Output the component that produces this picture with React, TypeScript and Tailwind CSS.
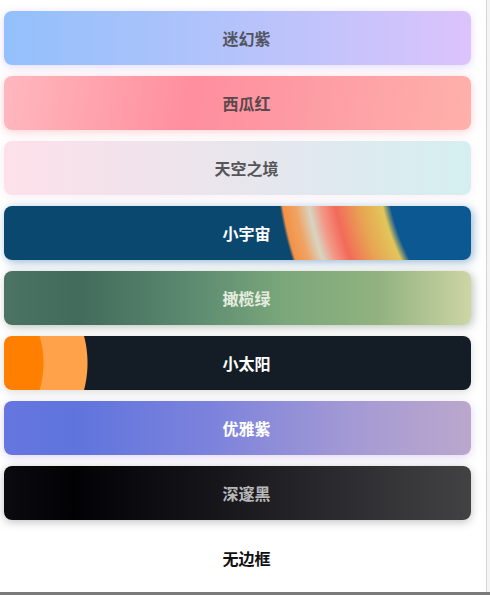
import React from "react";

type Item = {
  label: string;
  bg: string;
  text: string;
  shadow: string;
};

const items: Item[] = [
  {
    label: "迷幻紫",
    bg: "bg-[linear-gradient(to_right,#93c0fb_0%,#aac2fb_35%,#c4c3fb_70%,#dcc3fc_100%)]",
    text: "text-[#52555f]",
    shadow: "shadow-[0_2px_10px_rgba(190,170,250,0.45)]",
  },
  {
    label: "西瓜红",
    bg: "bg-[linear-gradient(100deg,#ffb8bf_0%,#ffa3ad_20%,#ff8e9e_40%,#fd9ca4_65%,#ffb1ab_100%)]",
    text: "text-[#5a484c]",
    shadow: "shadow-[0_2px_10px_rgba(255,150,160,0.45)]",
  },
  {
    label: "天空之境",
    bg: "bg-[linear-gradient(to_right,#fde0ea_0%,#ede4ec_40%,#dfe9ef_70%,#d5eff0_100%)]",
    text: "text-[#555559]",
    shadow: "shadow-[0_2px_10px_rgba(240,215,230,0.45)]",
  },
  {
    label: "小宇宙",
    bg: "bg-[radial-gradient(circle_at_610px_-50px,#0c5893_0px,#0c5893_229px,#e2c65a_237px,#e8a352_260px,#f36a5a_283px,#f49684_297px,#d8d4c2_309px,#efa466_322px,#f39246_335px,#0b4870_338px,#0b4870_100%)]",
    text: "text-white",
    shadow: "shadow-[2px_2px_10px_rgba(20,90,150,0.45)]",
  },
  {
    label: "撖榄绿",
    bg: "bg-[linear-gradient(to_right,#4c7363_0%,#426b5b_16%,#5b8a70_40%,#7ba77b_60%,#91b27f_80%,#cdd5a5_100%)]",
    text: "text-[#e5eddf]",
    shadow: "shadow-[2px_2px_10px_rgba(60,80,60,0.35)]",
  },
  {
    label: "小太阳",
    bg: "bg-[radial-gradient(circle_at_-54px_27px,#ff8000_93px,transparent_94px),radial-gradient(circle_at_-23px_27px,#ffa24a_106px,transparent_107px),linear-gradient(#141d25,#141d25)]",
    text: "text-white",
    shadow: "shadow-[0_2px_10px_rgba(0,0,0,0.15)]",
  },
  {
    label: "优雅紫",
    bg: "bg-[linear-gradient(to_right,#6676e0_0%,#5f74dd_15%,#7d83dc_45%,#a49ad4_75%,#bba7cc_100%)]",
    text: "text-white",
    shadow: "shadow-[0_2px_10px_rgba(170,150,220,0.4)]",
  },
  {
    label: "深邃黑",
    bg: "bg-[linear-gradient(to_right,#0b0a0e_0%,#020104_15%,#16151a_45%,#2e2d31_75%,#434243_100%)]",
    text: "text-[#b9b9bb]",
    shadow: "shadow-[0_2px_10px_rgba(0,0,0,0.25)]",
  },
];

export default function App() {
  return (
    <div
      className="w-[490px] h-[595px] bg-white flex flex-col overflow-hidden"
      style={{ fontFamily: '"Noto Sans CJK SC", "Noto Sans", sans-serif' }}
    >
      <div className="flex flex-1 min-h-0">
        <div className="w-[486px] flex flex-col pt-[11px] pl-[4px] gap-[11px]">
          {items.map((it) => (
            <div
              key={it.label}
              className={`w-[467px] h-[54px] shrink-0 rounded-[8px] flex items-center justify-center pl-[18px] ${it.bg} ${it.shadow}`}
            >
              <span className={`text-[16px] font-bold leading-none ${it.text}`}>{it.label}</span>
            </div>
          ))}
          <div className="w-[467px] h-[54px] shrink-0 flex items-center justify-center pl-[18px]">
            <span className="text-[16px] font-bold leading-none text-[#111111]">无边框</span>
          </div>
        </div>
        <div className="w-[4px] border-l border-[#d4d4d4] bg-[#f4f4f4]" />
      </div>
      <div className="h-[3px] bg-[#7a7a7a] shrink-0" />
    </div>
  );
}
